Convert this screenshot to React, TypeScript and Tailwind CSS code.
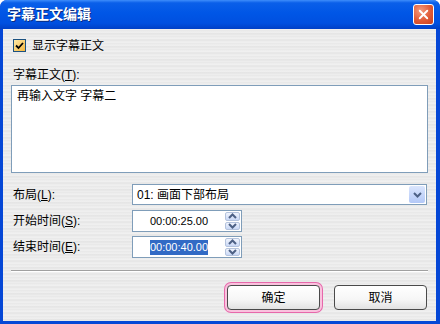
import { X } from 'lucide-react';

const FONT = "font-['Liberation_Sans','Noto_Sans_CJK_SC',sans-serif]";

function Chevron({ up }: { up?: boolean }) {
  return (
    <svg width="9" height="6" viewBox="0 0 9 6" className={up ? 'rotate-180' : ''}>
      <path d="M1 1 L4.5 4.5 L8 1" fill="none" stroke="#4d6185" strokeWidth="2" />
    </svg>
  );
}

function SpinBox({ value, selected }: { value: string; selected?: boolean }) {
  return (
    <div className="flex h-[22px] w-[110px] items-center border border-[#7f9db9] bg-white pr-[1px]">
      <div className="flex flex-1 justify-center text-[11px] text-black">
        <span className={selected ? 'bg-[#316ac5] text-white leading-[15px]' : 'leading-[15px]'}>{value}</span>
      </div>
      <div className="flex h-[18px] w-[15px] flex-col gap-[1px]">
        <div className="flex flex-1 items-center justify-center rounded-[2px] border border-[#b4c3dd] bg-[linear-gradient(180deg,#f0f4fd,#c9d8f6)]">
          <Chevron up />
        </div>
        <div className="flex flex-1 items-center justify-center rounded-[2px] border border-[#b4c3dd] bg-[linear-gradient(180deg,#f0f4fd,#c9d8f6)]">
          <Chevron />
        </div>
      </div>
    </div>
  );
}

function Button({ label, focus }: { label: string; focus?: boolean }) {
  return (
    <div
      className={`flex h-[25px] w-[93px] items-center justify-center rounded-[4px] border border-[#4a4a4a] bg-[linear-gradient(180deg,#ffffff_0%,#f6f6f6_60%,#e2e2e2_100%)] text-[12px] text-black ${
        focus ? 'shadow-[0_0_0_2px_#f9c2de,0_0_0_3px_#e768ab]' : ''
      }`}
    >
      {label}
    </div>
  );
}

export default function App() {
  return (
    <div className={`flex h-[324px] w-[440px] flex-col overflow-hidden rounded-t-[7px] bg-[#0547d6] ${FONT}`}>
      {/* title bar */}
      <div className="flex h-[29px] shrink-0 items-center justify-between bg-[linear-gradient(180deg,#3e8dfb_0%,#0a5fe9_10%,#0056e6_45%,#0050e0_80%,#0040c6_100%)] pl-[7px] pr-[6px]">
        <span className="text-[14px] font-bold text-white [text-shadow:1px_1px_0_#0a2b80]">字幕正文编辑</span>
        <div className="flex h-[21px] w-[21px] items-center justify-center rounded-[3px] border border-white bg-[radial-gradient(circle_at_35%_30%,#f49b7e,#e05a36_55%,#c8401f)]">
          <X size={15} strokeWidth={3} color="#ffffff" />
        </div>
      </div>

      {/* client area, brushed metal look */}
      <div className="mx-[3px] mb-[3px] mr-[4px] flex flex-1 flex-col bg-[#ececec] bg-[repeating-linear-gradient(180deg,#f2f2f2_0px,#e6e6e6_2px,#f3f3f3_3px,#e1e1e1_5px,#efefef_6px,#e7e7e7_8px,#f4f4f4_9px,#e4e4e4_11px,#f0f0f0_13px)] px-[8px] text-[12px] text-black">
        <div className="mt-[10px] flex h-[13px] items-center gap-[6px] pl-[2px]">
          <div className="flex h-[13px] w-[13px] items-center justify-center border border-[#1c5180] bg-[linear-gradient(135deg,#fde9a8,#f6b73c)]">
            <svg width="9" height="8" viewBox="0 0 9 8">
              <path d="M1 3.5 L3.5 6 L8 1" fill="none" stroke="#000" strokeWidth="1.8" />
            </svg>
          </div>
          <span className="leading-[14px]">显示字幕正文</span>
        </div>

        <div className="mt-[16px] h-[14px] pl-[2px] leading-[14px]">
          字幕正文(<u>T</u>):
        </div>

        <div className="mt-[3px] h-[88px] border border-[#7f9db9] bg-white px-[5px] pt-[3px] leading-[15px]">
          再输入文字 字幕二
        </div>

        <div className="mt-[11px] flex h-[21px] items-center">
          <span className="w-[121px] pl-[2px]">
            布局(<u>L</u>):
          </span>
          <div className="mr-[1px] flex h-[21px] flex-1 items-center justify-between border border-[#7f9db9] bg-white pl-[4px] pr-[1px]">
            <span>01: 画面下部布局</span>
            <div className="flex h-[17px] w-[16px] items-center justify-center rounded-[2px] bg-[linear-gradient(180deg,#dbe6fd,#b3c8f7)]">
              <Chevron />
            </div>
          </div>
        </div>

        <div className="mt-[5px] flex h-[22px] items-center">
          <span className="w-[121px] pl-[2px]">
            开始时间(<u>S</u>):
          </span>
          <SpinBox value="00:00:25.00" />
        </div>

        <div className="mt-[4px] flex h-[22px] items-center">
          <span className="w-[121px] pl-[2px]">
            结束时间(<u>E</u>):
          </span>
          <SpinBox value="00:00:40.00" selected />
        </div>

        <div className="mt-[12px] h-[2px] border-t border-b border-t-[#a0a0a0] border-b-white" />

        <div className="mt-[13px] flex items-center justify-end gap-[14px] pr-[1px]">
          <Button label="确定" focus />
          <Button label="取消" />
        </div>
      </div>
    </div>
  );
}
